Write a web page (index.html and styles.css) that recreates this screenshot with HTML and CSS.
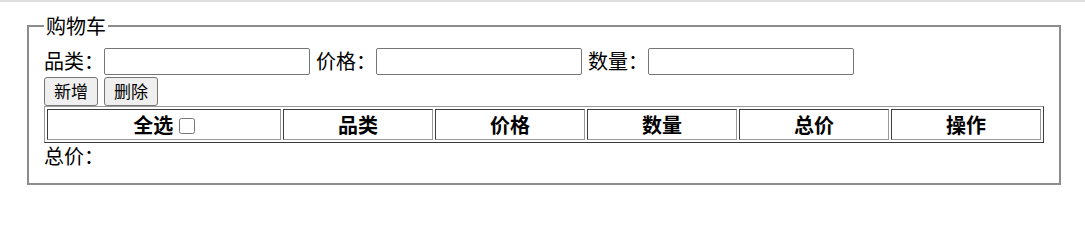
FILE: index.html
```html
<!DOCTYPE html>
<html lang="zh-CN">
<head>
<meta charset="utf-8">
<title>购物车</title>
<link rel="stylesheet" href="styles.css">
</head>
<body>
<div class="topbar"></div>
<fieldset class="cart">
  <legend class="cart-title">购物车</legend>
  <div class="form-row">
    <label class="field"><span class="field-label">品类：</span><input class="text-input" type="text"></label>
    <label class="field"><span class="field-label">价格：</span><input class="text-input" type="text"></label>
    <label class="field"><span class="field-label">数量：</span><input class="text-input" type="text"></label>
  </div>
  <div class="btn-row">
    <button class="btn" type="button">新增</button>
    <button class="btn" type="button">删除</button>
  </div>
  <table class="cart-table">
    <thead>
      <tr>
        <th class="col-select">全选 <input class="check" type="checkbox"></th>
        <th>品类</th>
        <th>价格</th>
        <th>数量</th>
        <th>总价</th>
        <th>操作</th>
      </tr>
    </thead>
  </table>
  <div class="total">总价：</div>
</fieldset>
</body>
</html>
```

FILE: styles.css
```css
html, body {
  margin: 0;
  padding: 0;
  background: #ffffff;
}

body {
  font-family: "Noto Sans CJK SC", "Noto Sans", sans-serif;
  font-size: 20px;
  color: #000000;
}

.topbar {
  height: 2px;
  background: #dedede;
}

.cart {
  margin: 11px 24px 0 27px;
  padding: 7px 15px 14px 15px;
  border: 2px solid #8c8c8c;
  min-width: 0;
}

.cart-title {
  padding: 0 2px;
  font-size: 20px;
  line-height: 26px;
}

.form-row {
  display: flex;
  align-items: center;
  height: 30px;
  gap: 6px;
}

.field {
  display: flex;
  align-items: center;
}

.field-label {
  font-size: 20px;
  line-height: 26px;
}

.text-input {
  box-sizing: border-box;
  width: 206px;
  height: 27px;
  margin: 0;
  padding: 1px 3px;
  border: 1px solid #767676;
  border-radius: 2px;
  font-family: "Noto Sans CJK SC", sans-serif;
  font-size: 16px;
}

.btn-row {
  display: flex;
  align-items: center;
  gap: 6px;
  height: 30px;
}

.btn {
  box-sizing: border-box;
  height: 29px;
  margin: 0;
  padding: 0 9px;
  border: 1px solid #767676;
  border-radius: 3px;
  background: #efefef;
  font-family: "Noto Sans CJK SC", sans-serif;
  font-size: 17px;
  line-height: 26px;
  color: #000000;
}

.cart-table {
  box-sizing: border-box;
  width: 1000px;
  border-collapse: separate;
  border-spacing: 2px;
  border: 1px solid;
  border-color: #9a9a9a #3c3c3c #3c3c3c #9a9a9a;
  table-layout: fixed;
}

.cart-table th {
  box-sizing: border-box;
  height: 31px;
  width: 150px;
  padding: 0;
  border: 1px solid;
  border-color: #3c3c3c #9a9a9a #9a9a9a #3c3c3c;
  font-size: 20px;
  font-weight: 700;
  line-height: 26px;
  text-align: center;
  vertical-align: middle;
}

.cart-table th.col-select {
  width: 234px;
}

.check {
  width: 16px;
  height: 16px;
  margin: 0 0 0 1px;
  vertical-align: -1px;
}

.total {
  font-size: 20px;
  line-height: 26px;
}
```
